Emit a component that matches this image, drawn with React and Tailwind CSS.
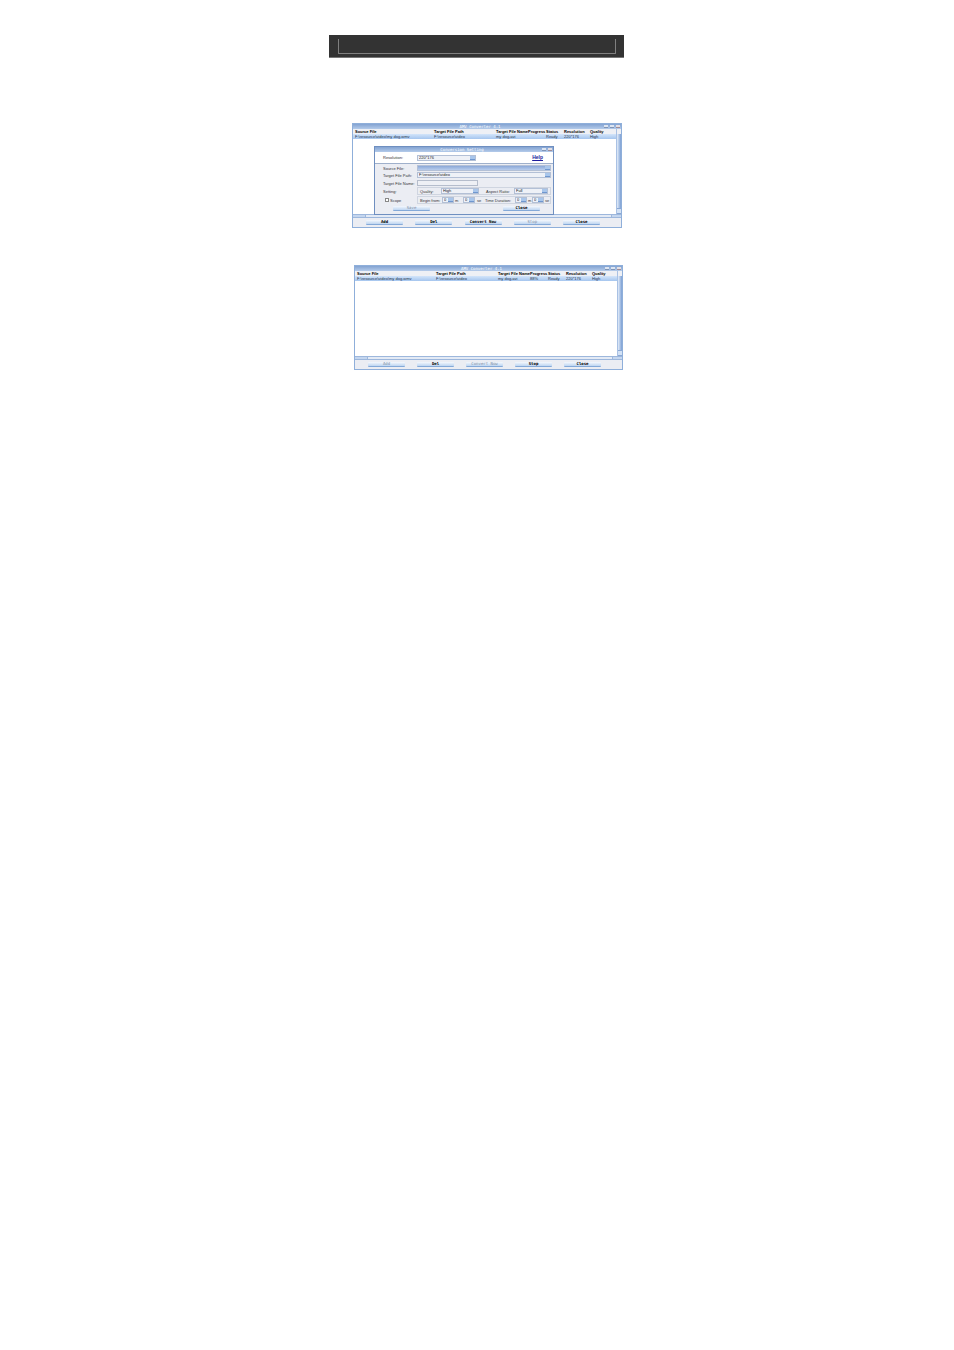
const columns = ['Source File', 'Target File Path', 'Target File Name', 'Progress', 'Status', 'Resolution', 'Quality']

function TitleBar({ title, small }) {
  return (
    <div className={`relative flex h-[5px] items-center justify-center bg-linear-to-b from-[#83a3d2] to-[#b4cbea] ${small ? 'pr-[4px]' : 'pr-[14px]'}`}>
      <span className="font-['DejaVu_Sans_Mono',monospace] text-[4px] leading-[5px] text-white whitespace-pre">{title}</span>
      <div className="absolute right-px top-px flex gap-[2px]">
        {!small && <button aria-label="Minimize" className="h-[3px] w-[4px] border-b border-[#8095b6] bg-[#dde5f1]" />}
        <button aria-label="Maximize" className="h-[3px] w-[4px] border-b border-[#8095b6] bg-[#dde5f1]" />
        <button aria-label="Close" className="h-[3px] w-[4px] border-b border-[#a08d98] bg-[#e4dfe3]" />
      </div>
    </div>
  )
}

function Button({ children, disabled }) {
  return (
    <button
      disabled={disabled}
      className="flex h-[5px] w-[37px] items-center justify-center rounded-[1px] border-b border-[#84a9d8] bg-linear-to-b from-[#f4f8fd] to-[#bfd6f1] font-['DejaVu_Sans_Mono',monospace] text-[4px] leading-[4px] font-bold text-black whitespace-nowrap disabled:font-normal disabled:text-[#7f8ea3]"
    >
      {children}
    </button>
  )
}

function Select({ label, value, className, filled }) {
  return (
    <div className={`flex h-[6px] border border-[#b3c0d6] ${filled ? 'bg-linear-to-b from-[#8ba8d8] to-[#b9cdec]' : 'bg-[#eef1f7]'} ${className}`}>
      <select aria-label={label} className="block min-w-0 flex-1 appearance-none pl-px text-[4px] leading-[4px] text-[#222]">
        <option>{value}</option>
      </select>
      <span className="w-[5px] shrink-0 border-b border-[#6f97cf] bg-[#a9c6eb]" />
    </div>
  )
}

function ConversionDialog() {
  return (
    <div className="absolute left-[21px] top-[22px] w-[180px] border border-[#6f8fc0] bg-[#ebedf3] text-[4px] leading-[5px] text-[#333]">
      <TitleBar title="Conversion Setting" small />
      <div className="flex h-[12px] items-center border-b border-[#9fb0cb] bg-white pl-[8px] pr-[10px]">
        <span className="w-[34px]">Resolution:</span>
        <Select label="Resolution" value="220*176" className="w-[59px]" />
        <a href="#help" className="ml-auto text-[5px] font-bold text-[#1c1c9c] underline">Help</a>
      </div>
      <div className="flex flex-col gap-px pt-px pr-[2px] pb-[3px] pl-[8px]">
        <div className="flex items-center">
          <span className="w-[34px] shrink-0">Source File:</span>
          <Select label="Source File" value="" className="flex-1" filled />
        </div>
        <div className="flex items-center">
          <span className="w-[34px] shrink-0">Target File Path:</span>
          <Select label="Target File Path" value="F:\resource\video" className="flex-1" />
        </div>
        <div className="flex items-center pt-px">
          <label htmlFor="target-name" className="w-[34px] shrink-0">Target File Name:</label>
          <input id="target-name" className="h-[6px] w-[61px] border border-[#b5bdcc] bg-[#eef0f5] text-[4px]" />
        </div>
        <div className="flex items-center">
          <span className="w-[34px] shrink-0">Setting:</span>
          <div className="flex h-[8px] flex-1 items-center border border-[#cfd5e0] px-[2px]">
            <span className="w-[21px]">Quality:</span>
            <Select label="Quality" value="High" className="w-[38px]" />
            <span className="ml-[7px] w-[28px]">Aspect Ratio:</span>
            <Select label="Aspect Ratio" value="Full" className="w-[34px]" />
          </div>
        </div>
        <div className="flex items-center">
          <label className="flex w-[34px] shrink-0 items-center gap-px pl-[2px]">
            <input type="checkbox" className="size-[4px] appearance-none border border-[#888] bg-white" />
            Scope
          </label>
          <div className="flex h-[8px] flex-1 items-center border border-[#cfd5e0] pl-[2px] whitespace-nowrap">
            <span className="w-[22px]">Begin from:</span>
            <Select label="Begin minutes" value="0" className="w-[12px]" />
            <span className="w-[9px] pl-px">m</span>
            <Select label="Begin seconds" value="0" className="w-[12px]" />
            <span className="w-[10px] pl-[2px]">se</span>
            <span className="w-[30px]">Time Duration:</span>
            <Select label="Duration minutes" value="0" className="w-[12px]" />
            <span className="w-[5px] pl-px">m</span>
            <Select label="Duration seconds" value="0" className="w-[12px]" />
            <span className="pl-px">se</span>
          </div>
        </div>
        <div className="flex justify-between pt-px pr-[11px] pl-[10px]">
          <Button disabled>Save</Button>
          <Button>Close</Button>
        </div>
      </div>
    </div>
  )
}

function ConverterWindow({ row, buttons, children }) {
  return (
    <section className="relative border border-[#8fafda] bg-[#ebedf3]">
      <TitleBar title="AMV Converter 4.1" />
      <div className="flex h-[85px] bg-white">
        <div className="min-w-0 flex-1">
          <table className="w-full table-fixed border-collapse text-left text-[4px] leading-[5px] whitespace-nowrap">
            <colgroup>
              <col className="w-[79px]" />
              <col className="w-[62px]" />
              <col className="w-[32px]" />
              <col className="w-[18px]" />
              <col className="w-[18px]" />
              <col className="w-[26px]" />
              <col />
            </colgroup>
            <thead>
              <tr className="h-[5px] bg-[#eef0f5]">
                {columns.map((name) => (
                  <th key={name} className="p-0 pl-[2px] font-bold text-black">{name}</th>
                ))}
              </tr>
            </thead>
            <tbody>
              <tr className="h-[5px] bg-linear-to-b from-[#d3e5fa] to-[#a5c5ee] text-[#24344c]">
                {row.map((cell, i) => (
                  <td key={columns[i]} className="p-0 pl-[2px]">{cell}</td>
                ))}
              </tr>
            </tbody>
          </table>
        </div>
        <div className="flex w-[5px] shrink-0 flex-col justify-between border-l border-[#a9c1e4] bg-linear-to-r from-[#e4edf9] to-[#7da0d4]">
          <span className="h-[5px] bg-[#eef0f5]" />
          <span className="h-[6px] border-y border-[#8aa8d4] bg-[#d2e1f5]" />
        </div>
      </div>
      <div className="flex h-[4px] justify-between border-y border-[#9db7dc] bg-[#e3eaf5]">
        <span className="w-[13px] border-r border-[#9db7dc] bg-[#c4d6ef]" />
        <span className="w-[10px] border-l border-[#9db7dc] bg-[#c4d6ef]" />
      </div>
      <div className="flex h-[9px] items-center justify-between pr-[21px] pl-[13px]">
        {buttons.map((b) => (
          <Button key={b.label} disabled={b.disabled}>{b.label}</Button>
        ))}
      </div>
      {children}
    </section>
  )
}

export default function App() {
  return (
    <main className="min-h-screen bg-white pt-[35px] font-['Liberation_Sans',sans-serif]">
      <div className="mx-auto w-full max-w-[296px]">
        <header className="mr-px h-[23px] border-b border-[#777] bg-[#333] pt-[4px] pr-[8px] pl-[9px]">
          <div className="h-[15px] rounded-b-[1px] border-x border-b border-[#808080]" />
        </header>
        <div className="mt-[65px] pr-[3px] pl-[23px]">
          <ConverterWindow
            row={['F:\\resource\\video\\my dog.wmv', 'F:\\resource\\video', 'my dog.avi', '', 'Ready', '220*176', 'High']}
            buttons={[
              { label: 'Add' },
              { label: 'Del' },
              { label: 'Convert Now' },
              { label: 'Stop', disabled: true },
              { label: 'Close' },
            ]}
          >
            <ConversionDialog />
          </ConverterWindow>
        </div>
        <div className="mt-[37px] pr-[2px] pl-[25px]">
          <ConverterWindow
            row={['F:\\resource\\video\\my dog.wmv', 'F:\\resource\\video', 'my dog.avi', '88%', 'Ready', '220*176', 'High']}
            buttons={[
              { label: 'Add', disabled: true },
              { label: 'Del' },
              { label: 'Convert Now', disabled: true },
              { label: 'Stop' },
              { label: 'Close' },
            ]}
          />
        </div>
      </div>
    </main>
  )
}
